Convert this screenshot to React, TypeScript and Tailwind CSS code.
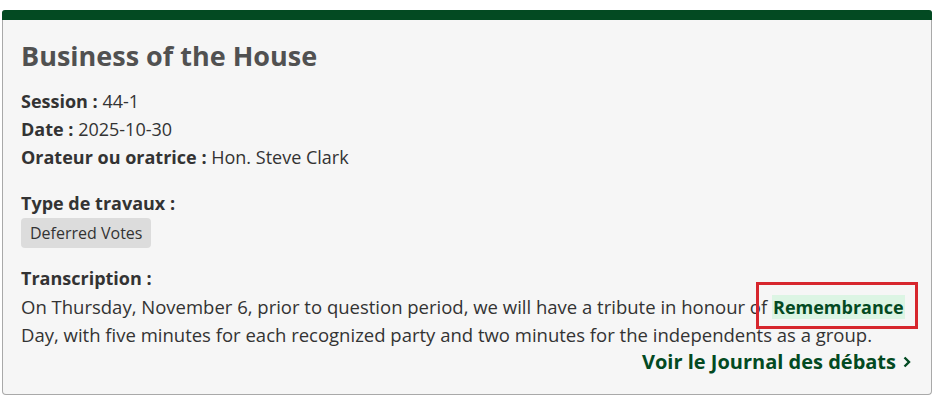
import React from "react";

interface MetaRowProps {
  label: string;
  value: string;
}

const MetaRow: React.FC<MetaRowProps> = ({ label, value }) => (
  <p className="leading-[28px]">
    <span className="font-bold">{label} :</span> {value}
  </p>
);

export default function App() {
  return (
    <div className="min-h-screen bg-white pt-[10px] pl-[2px] pr-[12px] font-['Open_Sans',sans-serif] text-[18px] text-[#333]">
      <div className="rounded-[4px] border border-[#a9a9a9] border-t-0 bg-[#f6f6f6]">
        {/* green header strip */}
        <div className="h-[10px] rounded-t-[3px] bg-[#034a22] -mx-px" />
        <div className="px-[18px] pt-[18px] pb-[18px]">
          <h2 className="text-[27px] font-bold leading-[36px] text-[#515151]">Business of the House</h2>

          <div className="mt-[13px]">
            <MetaRow label="Session" value="44-1" />
            <MetaRow label="Date" value="2025-10-30" />
            <MetaRow label="Orateur ou oratrice" value="Hon. Steve Clark" />
          </div>

          <div className="mt-[18px]">
            <p className="font-bold leading-[28px]">Type de travaux :</p>
            <span className="mt-[1px] inline-block rounded-[4px] bg-[#dcdcdc] px-[9px] text-[16px] leading-[30px] text-[#333]">
              Deferred Votes
            </span>
          </div>

          <div className="mt-[16px]">
            <p className="font-bold leading-[28px]">Transcription :</p>
            <p className="pt-[1px] text-[18.5px] leading-[27px]">
              On Thursday, November 6, prior to question period, we will have a tribute in honour of{" "}
              <span className="relative bg-[#dcf5e4] px-[1px] text-[18px] font-bold text-[#034a22]">
                Remembrance
                <span className="pointer-events-none absolute -left-[16px] -right-[13px] -top-[13px] -bottom-[10px] border-[3px] border-[#d7262d]" />
              </span>{" "}
              Day, with five minutes for each recognized party and two minutes for the independents as a group.
            </p>
          </div>

          <div className="flex justify-end pr-[2px]">
            <a href="#" className="flex items-center gap-[7px] text-[20px] font-bold leading-[28px] text-[#034a22]">
              Voir le Journal des débats
              <svg width="8" height="12" viewBox="0 0 8 12" fill="none">
                <path d="M1.5 1.5 6 6l-4.5 4.5" stroke="currentColor" strokeWidth="2.4" />
              </svg>
            </a>
          </div>
        </div>
      </div>
    </div>
  );
}
